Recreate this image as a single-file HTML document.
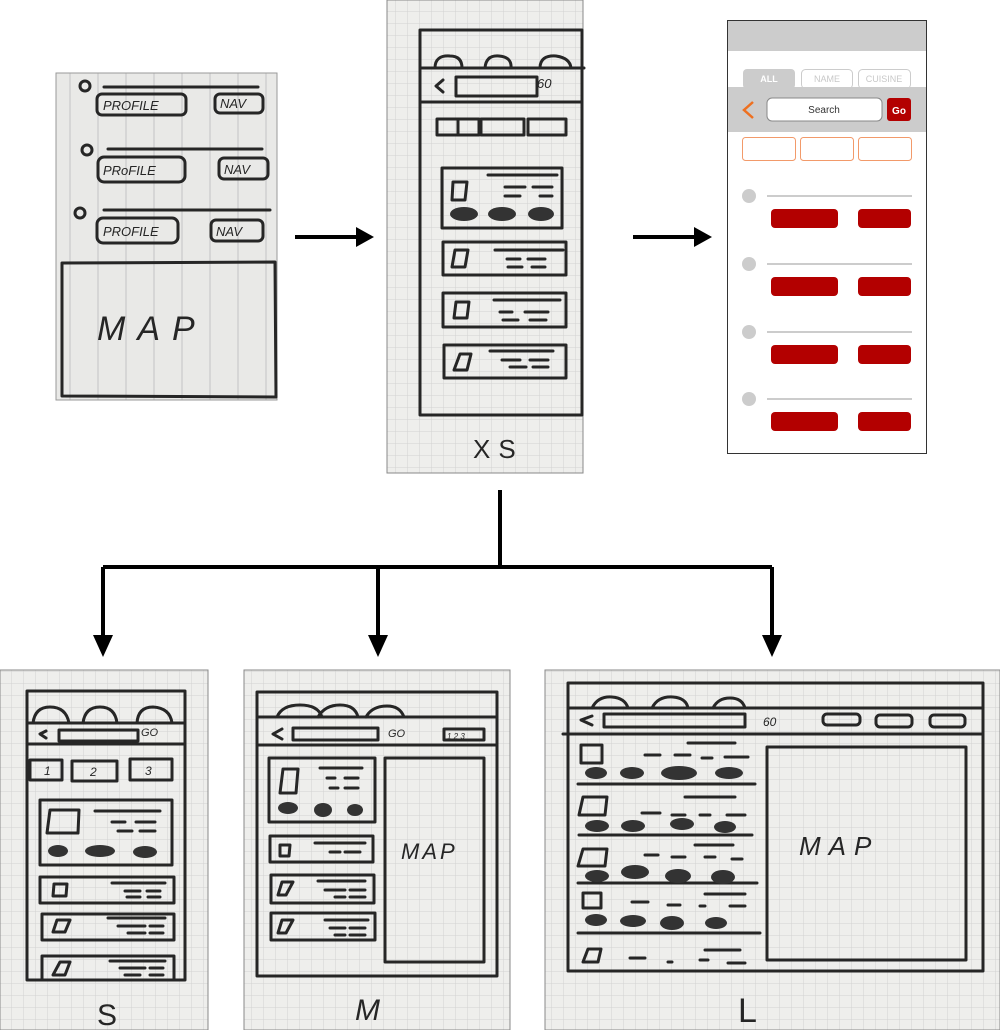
<!DOCTYPE html>
<html><head><meta charset="utf-8"><style>
html,body{margin:0;padding:0;background:#fff;width:1000px;height:1030px;overflow:hidden}
svg{display:block}
.s{fill:none;stroke:#262626;stroke-width:3;stroke-linecap:round;stroke-linejoin:round}
.t{font-family:"Liberation Sans",sans-serif;fill:#262626}
.h{font-family:"Liberation Sans",sans-serif;fill:#262626;font-style:italic}
</style></head><body>
<svg width="1000" height="1030" viewBox="0 0 1000 1030" xmlns="http://www.w3.org/2000/svg">
<defs>
<pattern id="g" width="12" height="12" patternUnits="userSpaceOnUse"><rect width="12" height="12" fill="#eeeeec"/><path d="M12 0V12M0 12H12" stroke="#d2d2d2" stroke-width="1"/></pattern>
<pattern id="ln" width="28" height="10" patternUnits="userSpaceOnUse"><rect width="28" height="10" fill="#e9e9e7"/><path d="M14 0V10" stroke="#c4c4c4" stroke-width="1"/></pattern>
</defs>

<!-- P1 lined paper -->
<rect x="56" y="73" width="221" height="327" fill="url(#ln)" stroke="#999"/>
<g class="s" stroke-width="2">
<circle cx="85" cy="86" r="5"/><path d="M104 87H258"/>
<rect x="97" y="94" width="89" height="21" rx="5"/><rect x="215" y="94" width="48" height="19" rx="5"/>
<circle cx="87" cy="150" r="5"/><path d="M108 149H262"/>
<rect x="98" y="157" width="87" height="25" rx="6"/><rect x="219" y="158" width="49" height="21" rx="5"/>
<circle cx="80" cy="213" r="5"/><path d="M104 210H270"/>
<rect x="97" y="218" width="81" height="25" rx="6"/><rect x="211" y="220" width="52" height="21" rx="5"/>
<path d="M62 263L275 262L276 397L62 396Z"/>
</g>
<g class="h" font-size="13"><text x="103" y="110">PROFILE</text><text x="220" y="108">NAV</text>
<text x="103" y="175">PRoFILE</text><text x="224" y="174">NAV</text>
<text x="103" y="236">PROFILE</text><text x="216" y="236">NAV</text></g>
<text class="h" x="97" y="340" font-size="34" letter-spacing="12">MAP</text>

<!-- arrows -->
<g stroke="#000" stroke-width="4" fill="none"><path d="M295 237H360"/><path d="M633 237H698"/>
<path d="M500 490V567M103 567H772M103 567V640M378 567V640M772 567V640"/></g>
<g fill="#000"><path d="M356 227L374 237L356 247Z"/><path d="M694 227L712 237L694 247Z"/>
<path d="M93 635L103 657L113 635Z"/><path d="M368 635L378 657L388 635Z"/><path d="M762 635L772 657L782 635Z"/></g>

<!-- P2 XS -->
<rect x="387" y="0" width="196" height="473" fill="url(#g)" stroke="#888"/>
<g class="s">
<rect x="420" y="30" width="162" height="385"/>
<path d="M420 68H584M420 102H582"/>
<path d="M435 68Q435 55 450 56Q462 56 462 68M485 68Q486 55 499 56Q512 57 511 68M540 68Q540 55 556 56Q570 58 571 68"/>
<path d="M443 80L436 86L443 92"/><rect x="456" y="77" width="81" height="19"/>
<rect x="437" y="119" width="42" height="16"/><rect x="481" y="119" width="43" height="16"/><rect x="528" y="119" width="38" height="16"/><path d="M458 119V135"/>
<rect x="442" y="168" width="120" height="60"/><path d="M453 182H467L465 200H452Z"/>
<path d="M488 175H557M505 187H525M533 187H552M505 196H520M540 196H552"/>
<rect x="443" y="242" width="123" height="33"/><path d="M455 250H468L465 267H452Z M495 250H563 M507 259H520 M528 259H545 M508 267H522 M532 267H545"/>
<rect x="443" y="293" width="123" height="34"/><path d="M456 302H469L467 318H454Z M494 300H560 M500 312H512 M525 312H548 M503 320H518 M530 320H546"/>
<rect x="444" y="345" width="122" height="33"/><path d="M460 354H471L467 370H454Z M490 351H553 M502 360H520 M530 360H548 M510 367H526 M533 367H548"/>
</g>
<g fill="#333"><ellipse cx="464" cy="214" rx="14" ry="7"/><ellipse cx="502" cy="214" rx="14" ry="7"/><ellipse cx="541" cy="214" rx="13" ry="7"/></g>
<text class="h" x="537" y="88" font-size="13">60</text>
<text class="t" x="473" y="458" font-size="26" letter-spacing="8">XS</text>

<!-- Mockup -->
<rect x="727.5" y="20.5" width="199" height="433" fill="#fff" stroke="#333"/>
<rect x="728" y="21" width="198" height="30" fill="#cccccc"/>
<rect x="743" y="69" width="52" height="20" rx="4" fill="#cccccc"/>
<rect x="801.5" y="69.5" width="51" height="19" rx="4" fill="#fff" stroke="#ccc"/>
<rect x="858.5" y="69.5" width="52" height="19" rx="4" fill="#fff" stroke="#ccc"/>
<g font-family="Liberation Sans,sans-serif" font-size="9" text-anchor="middle"><text x="769" y="82" fill="#fff" font-weight="bold">ALL</text><text x="827" y="82" fill="#c8c8c8">NAME</text><text x="884" y="82" fill="#c8c8c8">CUISINE</text></g>
<rect x="728" y="87" width="198" height="45" fill="#cccccc"/>
<path d="M753 102L744 110L753 118" fill="none" stroke="#ee7020" stroke-width="2.5"/>
<rect x="767" y="98" width="115" height="23" rx="5" fill="#fff" stroke="#888"/>
<text x="824" y="113" font-family="Liberation Sans,sans-serif" font-size="10" text-anchor="middle" fill="#333">Search</text>
<rect x="887" y="98" width="24" height="23" rx="3" fill="#b30000"/>
<text x="899" y="114" font-family="Liberation Sans,sans-serif" font-size="10" font-weight="bold" text-anchor="middle" fill="#fff">Go</text>
<g fill="#fff" stroke="#f29a6a"><rect x="742.5" y="137.5" width="53" height="23" rx="3"/><rect x="800.5" y="137.5" width="53" height="23" rx="3"/><rect x="858.5" y="137.5" width="53" height="23" rx="3"/></g>
<g><g id="r"><circle cx="749" cy="196" r="7" fill="#cccccc"/><rect x="767" y="195" width="145" height="2" fill="#cccccc"/><rect x="771" y="209" width="67" height="19" rx="4" fill="#b30000"/><rect x="858" y="209" width="53" height="19" rx="4" fill="#b30000"/></g>
<use href="#r" y="68"/><use href="#r" y="136"/><use href="#r" y="203"/></g>

<!-- P3 S -->
<rect x="0" y="670" width="208" height="360" fill="url(#g)" stroke="#888"/>
<g class="s">
<rect x="27" y="691" width="158" height="289"/><path d="M27 723H185M27 744H185"/>
<path d="M33 723Q35 707 50 707Q66 707 69 723M83 723Q85 707 100 707Q115 707 117 723M137 723Q138 707 153 707Q170 708 172 723"/>
<path d="M46 731L40 734L46 738"/><rect x="59" y="730" width="79" height="11"/>
<rect x="30" y="760" width="32" height="20"/><rect x="72" y="761" width="45" height="20"/><rect x="130" y="759" width="42" height="21"/>
<rect x="40" y="800" width="132" height="65"/><path d="M50 810H79L78 833H47Z M95 811H160 M112 822H125 M136 822H155 M118 831H132 M140 831H155"/>
<rect x="40" y="877" width="134" height="26"/><path d="M54 884H67L66 896H53Z M112 883H165 M125 891H140 M147 891H160 M127 897H140 M148 897H160"/>
<rect x="42" y="914" width="132" height="26"/><path d="M57 920H70L65 932H53Z M108 918H165 M118 926H145 M150 926H163 M128 933H145 M150 933H163"/>
<rect x="42" y="956" width="132" height="24"/><path d="M60 962H70L65 975H53Z M110 961H165 M120 968H145 M150 968H163 M125 975H140 M150 975H163"/>
</g>
<g fill="#333"><ellipse cx="58" cy="851" rx="10" ry="6"/><ellipse cx="100" cy="851" rx="15" ry="6"/><ellipse cx="145" cy="852" rx="12" ry="6"/></g>
<text class="h" x="141" y="736" font-size="11">GO</text>
<text class="h" x="44" y="775" font-size="12">1</text><text class="h" x="90" y="776" font-size="12">2</text><text class="h" x="145" y="775" font-size="12">3</text>
<text class="t" x="97" y="1025" font-size="30">S</text>

<!-- P4 M -->
<rect x="244" y="670" width="266" height="360" fill="url(#g)" stroke="#888"/>
<g class="s">
<rect x="257" y="692" width="240" height="284"/><path d="M257 717H497M257 745H497"/>
<path d="M277 717Q282 705 300 705Q318 705 322 717M318 717Q325 705 340 705Q355 705 358 717M366 717Q372 706 387 706Q400 706 404 717"/>
<path d="M282 729L273 734L282 739"/><rect x="293" y="728" width="85" height="12"/>
<rect x="444" y="729" width="40" height="11"/>
<rect x="269" y="758" width="106" height="64"/><path d="M283 769H298L296 793H280Z M320 768H362 M327 778H335 M345 778H358 M330 788H338 M345 788H358"/>
<rect x="270" y="836" width="103" height="26"/><path d="M280 845H290L289 856H280Z M315 843H365 M330 852H340 M345 852H360"/>
<rect x="271" y="875" width="103" height="28"/><path d="M282 882H293L286 895H278Z M318 881H365 M325 890H345 M350 890H365 M335 897H345 M350 897H365"/>
<rect x="271" y="913" width="104" height="27"/><path d="M282 920H293L286 933H278Z M325 920H368 M330 928H345 M350 928H365 M335 935H345 M350 935H365"/>
<rect x="385" y="758" width="99" height="204"/>
</g>
<g fill="#333"><ellipse cx="288" cy="808" rx="10" ry="6"/><ellipse cx="323" cy="810" rx="9" ry="7"/><ellipse cx="355" cy="810" rx="8" ry="6"/></g>
<text class="h" x="388" y="737" font-size="11">GO</text><text class="h" x="447" y="739" font-size="8">1 2 3</text>
<text class="h" x="401" y="859" font-size="22" letter-spacing="3">MAP</text>
<text class="h" x="355" y="1020" font-size="30">M</text>

<!-- P5 L -->
<rect x="545" y="670" width="455" height="360" fill="url(#g)" stroke="#888"/>
<g class="s">
<path d="M568 683H983V971H568Z M568 708H983 M563 734H983"/>
<path d="M592 708Q598 696 612 697Q625 698 628 708M652 708Q658 696 673 697Q686 698 688 708M713 708Q718 698 730 698Q742 698 745 708"/>
<path d="M592 716L581 720L592 725"/><rect x="604" y="714" width="141" height="13"/>
<rect x="823" y="714" width="37" height="11" rx="4"/><rect x="876" y="715" width="36" height="12" rx="4"/><rect x="930" y="715" width="35" height="12" rx="4"/>
<rect x="767" y="747" width="199" height="213"/>
<path d="M578 784H755M579 835H752M578 883H757M578 933H760"/>
<path d="M581 745H602V763H581Z M688 743H735 M645 755H660 M675 755H690 M702 758H712 M725 757H748"/>
<path d="M583 797H607L605 815H579Z M685 797H735 M642 813H660 M672 815H685 M700 815H710 M727 815H745"/>
<path d="M583 849H607L605 866H578Z M695 845H733 M645 855H658 M672 857H685 M705 857H715 M732 859H742"/>
<path d="M583 893H601V908H583Z M705 894H745 M632 902H648 M668 905H680 M700 906H705 M730 906H745"/>
<path d="M588 949H601L598 962H583Z M705 950H740 M630 958H645 M668 962H672 M700 960H708 M728 963H745"/>
</g>
<g fill="#333"><ellipse cx="596" cy="773" rx="11" ry="6"/><ellipse cx="632" cy="773" rx="12" ry="6"/><ellipse cx="679" cy="773" rx="18" ry="7"/><ellipse cx="729" cy="773" rx="14" ry="6"/>
<ellipse cx="597" cy="826" rx="12" ry="6"/><ellipse cx="633" cy="826" rx="12" ry="6"/><ellipse cx="682" cy="824" rx="12" ry="6"/><ellipse cx="725" cy="827" rx="11" ry="6"/>
<ellipse cx="597" cy="876" rx="12" ry="6"/><ellipse cx="635" cy="872" rx="14" ry="7"/><ellipse cx="678" cy="876" rx="13" ry="7"/><ellipse cx="723" cy="877" rx="12" ry="7"/>
<ellipse cx="596" cy="920" rx="11" ry="6"/><ellipse cx="633" cy="921" rx="13" ry="6"/><ellipse cx="672" cy="923" rx="12" ry="7"/><ellipse cx="716" cy="923" rx="11" ry="6"/></g>
<text class="h" x="763" y="726" font-size="12">60</text>
<text class="h" x="799" y="855" font-size="26" letter-spacing="8">MAP</text>
<text class="t" x="738" y="1022" font-size="34">L</text>
</svg>
</body></html>
